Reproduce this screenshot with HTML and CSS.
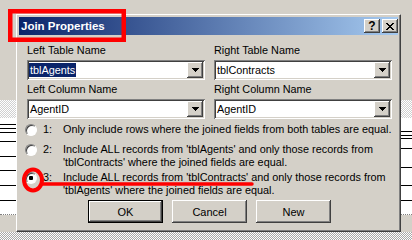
FILE: index.html
```html
<!DOCTYPE html>
<html lang="en">
<head>
    <meta charset="UTF-8">
    <meta name="viewport" content="width=device-width, initial-scale=1.0">
    <title>Join Properties</title>
    <link rel="stylesheet" href="styles.css">
</head>
<body>
<div class="screen">

    <!-- window behind the dialog -->
    <div class="backdrop">
        <div class="bg-top"></div>
        <div class="bg-band"></div>
        <div class="bg-sheets">
            <div class="sheet sheet-left"></div>
            <div class="sheet sheet-right"></div>
        </div>
        <div class="bg-gap"></div>
        <div class="bg-floor"></div>
    </div>

    <div class="dialog">
        <div class="titlebar">
            <span class="title">Join Properties</span>
            <div class="caption-btns">
                <button class="cap-btn">?</button>
                <button class="cap-btn">
                    <svg width="8" height="7" viewBox="0 0 8 7"><path d="M0 0h2v1H0zM6 0h2v1H6zM1 1h2v1H1zM5 1h2v1H5zM2 2h4v1H2zM3 3h2v1H3zM2 4h4v1H2zM1 5h2v1H1zM5 5h2v1H5zM0 6h2v1H0zM6 6h2v1H6z"/></svg>
                </button>
            </div>
        </div>

        <div class="content">
            <div class="fields">
                <div class="field">
                    <div class="label">Left Table Name</div>
                    <div class="combo">
                        <div class="combo-value selected"><span>tblAgents</span></div>
                        <div class="drop-btn"><svg width="7" height="4" viewBox="0 0 7 4"><path d="M0 0h7v1H0zM1 1h5v1H1zM2 2h3v1H2zM3 3h1v1H3z"/></svg></div>
                    </div>
                </div>
                <div class="field">
                    <div class="label">Right Table Name</div>
                    <div class="combo">
                        <div class="combo-value">tblContracts</div>
                        <div class="drop-btn"><svg width="7" height="4" viewBox="0 0 7 4"><path d="M0 0h7v1H0zM1 1h5v1H1zM2 2h3v1H2zM3 3h1v1H3z"/></svg></div>
                    </div>
                </div>
                <div class="field">
                    <div class="label">Left Column Name</div>
                    <div class="combo">
                        <div class="combo-value">AgentID</div>
                        <div class="drop-btn"><svg width="7" height="4" viewBox="0 0 7 4"><path d="M0 0h7v1H0zM1 1h5v1H1zM2 2h3v1H2zM3 3h1v1H3z"/></svg></div>
                    </div>
                </div>
                <div class="field">
                    <div class="label">Right Column Name</div>
                    <div class="combo">
                        <div class="combo-value">AgentID</div>
                        <div class="drop-btn"><svg width="7" height="4" viewBox="0 0 7 4"><path d="M0 0h7v1H0zM1 1h5v1H1zM2 2h3v1H2zM3 3h1v1H3z"/></svg></div>
                    </div>
                </div>
            </div>

            <div class="options">
                <div class="option opt-1">
                    <span class="radio"></span>
                    <span class="opt-num">1:</span>
                    <span class="opt-text">Only include rows where the joined fields from both tables are equal.</span>
                </div>
                <div class="option opt-2">
                    <span class="radio"></span>
                    <span class="opt-num">2:</span>
                    <span class="opt-text">Include ALL records from 'tblAgents' and only those records from<br>'tblContracts' where the joined fields are equal.</span>
                </div>
                <div class="option opt-3">
                    <span class="radio checked"></span>
                    <span class="opt-num">3:</span>
                    <span class="opt-text">Include ALL records from 'tblContracts' and only those records from<br>'tblAgents' where the joined fields are equal.</span>
                </div>
            </div>

            <div class="actions">
                <button class="btn btn-default">OK</button>
                <button class="btn">Cancel</button>
                <button class="btn">New</button>
            </div>
        </div>
    </div>

    <!-- red markup drawn over the screenshot -->
    <svg class="marks" width="412" height="240" viewBox="0 0 412 240">
        <rect x="10.25" y="11.25" width="113.5" height="28.5" fill="none" stroke="#f00" stroke-width="4.5"/>
        <ellipse cx="33" cy="180" rx="9" ry="10.5" fill="none" stroke="#f00" stroke-width="4"/>
        <line x1="43" y1="184" x2="252" y2="184" stroke="#f00" stroke-width="3.5" stroke-linecap="round"/>
    </svg>
</div>
</body>
</html>
```

FILE: styles.css
```css
* {
    box-sizing: border-box;
}

body {
    margin: 0;
    font-family: "Liberation Sans", Arial, sans-serif;
    font-size: 10.85px;
    color: #000;
    background-color: #d4d0c8;
}

.screen {
    position: relative;
    width: 412px;
    height: 240px;
    overflow: hidden;
}

/* background window */
.backdrop {
    display: flex;
    flex-direction: column;
    height: 240px;
}
.bg-top {
    height: 100px;
}
.bg-band {
    height: 18px;
    background: repeating-conic-gradient(#d0d0d0 0 25%, #fff 0 50%) 0 0 / 2px 2px;
}
.bg-sheets {
    display: flex;
    justify-content: space-between;
    height: 97px;
}
.sheet {
    height: 97px;
    background-color: #fff;
    border-bottom: 1px dotted #808080;
}
.sheet-left {
    width: 16px;
    background-image:
        linear-gradient(#000, #000), linear-gradient(#000, #000),
        linear-gradient(#000, #000), linear-gradient(#000, #000),
        linear-gradient(#000, #000), linear-gradient(#000, #000),
        linear-gradient(#000, #000), linear-gradient(#000, #000);
    background-size: 100% 1px;
    background-repeat: no-repeat;
    background-position: 0 6px, 0 10px, 0 14px, 0 23px, 0 38px, 0 52px, 0 67px, 0 82px;
}
.sheet-right {
    width: 11px;
    background-image:
        linear-gradient(#000, #000), linear-gradient(#000, #000),
        linear-gradient(#000, #000), linear-gradient(#000, #000),
        linear-gradient(#000, #000), linear-gradient(#000, #000),
        linear-gradient(#000, #000);
    background-size: 100% 1px;
    background-repeat: no-repeat;
    background-position: 0 13px, 0 17px, 0 20px, 0 30px, 0 49px, 0 67px, 0 82px;
}
.bg-gap {
    height: 17px;
}
.bg-floor {
    height: 8px;
    background: repeating-conic-gradient(#a8a8a8 0 25%, #fff 0 50%) 0 0 / 2px 2px;
}

/* dialog */
.dialog {
    position: absolute;
    left: 16px;
    top: 14px;
    width: 385px;
    height: 218px;
    padding: 2px;
    background-color: #d4d0c8;
    border: 1px solid;
    border-color: #fff #404040 #404040 #fff;
    box-shadow: inset -1px -1px #808080, inset 1px 1px #d4d0c8;
}

.titlebar {
    display: flex;
    align-items: center;
    height: 18px;
    padding-left: 2px;
    background: linear-gradient(to right, #0a246a, #a6caf0);
    color: #fff;
    font-size: 11.5px;
    font-weight: bold;
}
.caption-btns {
    display: flex;
    gap: 2px;
    margin-left: auto;
}
.cap-btn {
    display: flex;
    align-items: center;
    justify-content: center;
    width: 16px;
    height: 14px;
    padding: 0;
    border: none;
    background-color: #d4d0c8;
    box-shadow: inset -1px -1px #404040, inset 1px 1px #fff, inset -2px -2px #808080;
    font: bold 12px "Liberation Sans", Arial, sans-serif;
    color: #000;
}

.content {
    padding: 9px 0 0 8px;
}

.fields {
    display: grid;
    grid-template-columns: 178px 178px;
    column-gap: 9px;
    row-gap: 3px;
}
.label {
    line-height: 13px;
    margin-bottom: 3px;
}
.combo {
    display: flex;
    align-items: center;
    height: 20px;
    padding: 2px;
    background-color: #fff;
    box-shadow: inset 1px 1px #808080, inset -1px -1px #fff, inset 2px 2px #404040, inset -2px -2px #d4d0c8;
}
.combo-value {
    flex: 1;
    padding-left: 1px;
    line-height: 14px;
}
.combo-value.selected {
    padding-left: 0;
}
.combo-value.selected span {
    display: inline-block;
    padding: 0 1px;
    background-color: #0a246a;
    color: #fff;
}
.drop-btn {
    display: flex;
    align-items: center;
    justify-content: center;
    width: 16px;
    height: 16px;
    background-color: #d4d0c8;
    box-shadow: inset -1px -1px #404040, inset 1px 1px #fff, inset -2px -2px #808080;
}

.options {
    margin: 4px 0 0 -2px;
}
.option {
    display: flex;
    align-items: flex-start;
    line-height: 13px;
}
.opt-1 {
    margin-bottom: 7px;
}
.opt-2 {
    margin-bottom: 2px;
}
.radio {
    flex: none;
    width: 12px;
    height: 12px;
    margin-top: 1px;
    border-radius: 50%;
    border: 1px solid;
    border-color: #808080 #fff #fff #808080;
    background-color: #fff;
    box-shadow: inset 1px 1px #404040;
}
.radio.checked {
    background: radial-gradient(circle, #000 0 2px, #fff 2.5px);
}
.opt-num {
    width: 20px;
    margin-left: 6px;
}
.opt-text {
    white-space: nowrap;
}

.actions {
    display: flex;
    gap: 9px;
    margin-top: 3px;
    padding-left: 61px;
}
.btn {
    width: 75px;
    height: 23px;
    padding: 0;
    border: none;
    background-color: #d4d0c8;
    box-shadow: inset -1px -1px #404040, inset 1px 1px #fff, inset -2px -2px #808080;
    font: 11px "Liberation Sans", Arial, sans-serif;
    color: #000;
}
.btn-default {
    border: 1px solid #000;
}

.marks {
    position: absolute;
    left: 0;
    top: 0;
    pointer-events: none;
}
```
